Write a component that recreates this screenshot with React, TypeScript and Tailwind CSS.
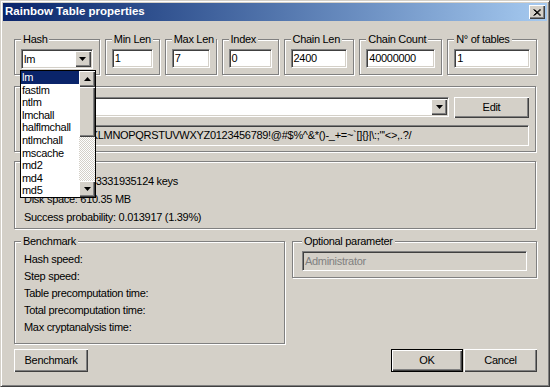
import type { ReactNode } from "react";

const SUNKEN =
  "border border-t-[#808080] border-l-[#808080] border-r-white border-b-white shadow-[inset_1px_1px_0_#404040,inset_-1px_-1px_0_#d4d0c8]";
const RAISED = "shadow-[inset_1px_1px_0_#fff,inset_-1px_-1px_0_#404040,inset_-2px_-2px_0_#808080]";

const HASHES = ["lm", "fastlm", "ntlm", "lmchall", "halflmchall", "ntlmchall", "mscache", "md2", "md4", "md5"];
const CHARSET = "ABCDEFGHIJKLMNOPQRSTUVWXYZ0123456789!@#$%^&*()-_+=~`[]{}|\\:;\"'<>,.?/";

function Group({ label, className = "", children }: { label?: string; className?: string; children?: ReactNode }) {
  return (
    <fieldset
      className={`min-w-0 border border-[#808080] px-[6px] shadow-[inset_1px_1px_0_#fff,1px_1px_0_#fff] ${className}`}
    >
      {label && <legend className="whitespace-nowrap bg-[#d4d0c8] px-[2px] leading-[13px]">{label}</legend>}
      {children}
    </fieldset>
  );
}

function Arrow({ up }: { up?: boolean }) {
  return (
    <svg width="7" height="4" viewBox="0 0 7 4" className="block">
      <polygon points={up ? "3.5,0 7,4 0,4" : "0,0 7,0 3.5,4"} fill="#000" />
    </svg>
  );
}

function Field({ value, className = "", disabled }: { value: string; className?: string; disabled?: boolean }) {
  return (
    <div
      className={`flex h-[19px] items-center overflow-hidden whitespace-nowrap pl-[2px] ${SUNKEN} ${
        disabled ? "bg-[#d4d0c8] text-[#808080]" : "bg-white"
      } ${className}`}
    >
      {value}
    </div>
  );
}

function Combo({ value, className = "", children }: { value: string; className?: string; children?: ReactNode }) {
  return (
    <div className={`relative flex h-[20px] items-center bg-white ${SUNKEN} ${className}`}>
      <span className="flex-1 pl-[2px]">{value}</span>
      <div className={`mr-px flex h-[16px] w-[16px] items-center justify-center bg-[#d4d0c8] ${RAISED}`}>
        <Arrow />
      </div>
      {children}
    </div>
  );
}

function HashList() {
  return (
    <div className="absolute left-[-2px] top-[calc(100%+2px)] z-10 flex h-[128px] w-[76px] border border-black bg-white">
      <div className="flex-1">
        {HASHES.map((h, i) => (
          <div
            key={h}
            className={`h-[12.6px] pl-[1px] leading-[12.6px] ${i === 0 ? "bg-[#0a246a] text-white" : ""}`}
          >
            {h}
          </div>
        ))}
      </div>
      <div className="flex w-[16px] flex-col bg-[image:repeating-conic-gradient(#fff_0_25%,#d4d0c8_0_50%)] bg-[length:2px_2px]">
        <div className={`flex h-[16px] items-center justify-center bg-[#d4d0c8] ${RAISED}`}>
          <Arrow up />
        </div>
        <div className={`h-[50px] bg-[#d4d0c8] ${RAISED}`} />
        <div className="flex-1" />
        <div className={`flex h-[16px] items-center justify-center bg-[#d4d0c8] ${RAISED}`}>
          <Arrow />
        </div>
      </div>
    </div>
  );
}

function Button({ children, className = "", isDefault }: { children: ReactNode; className?: string; isDefault?: boolean }) {
  return (
    <div
      className={`flex h-[23px] items-center justify-center bg-[#d4d0c8] ${
        isDefault ? "border border-black" : ""
      } ${RAISED} ${className}`}
    >
      {children}
    </div>
  );
}

export default function App() {
  return (
    <div className="flex h-[387px] w-[550px] flex-col border border-t-[#d4d0c8] border-l-[#d4d0c8] border-r-[#404040] border-b-[#404040] bg-[#d4d0c8] p-[2px] font-['Liberation_Sans',Arial,sans-serif] text-[11px] tracking-[-0.3px] text-black shadow-[inset_1px_1px_0_#fff,inset_-1px_-1px_0_#808080]">
      <div className="flex h-[18px] shrink-0 items-center justify-between bg-linear-to-r from-[#0a246a] to-[#a6caf0] pl-[2px] pr-[2px]">
        <span className="text-[11.5px] font-bold tracking-normal text-white">Rainbow Table properties</span>
        <div className={`flex h-[14px] w-[16px] items-center justify-center bg-[#d4d0c8] ${RAISED}`}>
          <svg width="8" height="7" viewBox="0 0 8 7">
            <path d="M0.5 0.5 L7 6.5 M1.5 0.5 L8 6.5 M7 0.5 L0.5 6.5 M8 0.5 L1.5 6.5" stroke="#000" strokeWidth="1" />
          </svg>
        </div>
      </div>

      <div className="flex flex-1 flex-col pl-[11px] pr-[10px]">
        <div className="mt-[12px] flex gap-[5px]">
          <Group label="Hash" className="w-[86px] pb-[5px] pt-[3px]">
            <Combo value="lm">
              <HashList />
            </Combo>
          </Group>
          <Group label="Min Len" className="w-[55px] pb-[5px] pt-[3px]">
            <Field value="1" />
          </Group>
          <Group label="Max Len" className="w-[52px] pb-[5px] pt-[3px]">
            <Field value="7" />
          </Group>
          <Group label="Index" className="w-[57px] pb-[5px] pt-[3px]">
            <Field value="0" />
          </Group>
          <Group label="Chain Len" className="w-[71px] pb-[5px] pt-[3px]">
            <Field value="2400" />
          </Group>
          <Group label="Chain Count" className="w-[83px] pb-[5px] pt-[3px]">
            <Field value="40000000" />
          </Group>
          <Group label="N° of tables" className="w-[90px] pb-[5px] pt-[3px]">
            <Field value="1" />
          </Group>
        </div>

        <Group label="Charset" className="mt-[5px] w-[522px] pb-[5px] pt-[4px]">
          <div className="flex gap-[5px]">
            <Combo value="" className="w-[428px]" />
            <Button className="w-[75px] !h-[21px]">Edit</Button>
          </div>
          <Field value={CHARSET} disabled className="mt-[7px] h-[21px] text-black" />
        </Group>

        <Group className="mt-[9px] w-[522px] pb-[4px] pt-[13px]">
          <div className="flex flex-col gap-[5px] pl-[3px] leading-[13px]">
            <span>Key space: 6823331935124 keys</span>
            <span>Disk space: 610.35 MB</span>
            <span>Success probability: 0.013917 (1.39%)</span>
          </div>
        </Group>

        <div className="mt-[6px] flex items-start gap-[7px]">
          <Group label="Benchmark" className="w-[272px] pb-[9px] pt-[5px]">
            <div className="flex flex-col gap-[4px] pl-[3px] leading-[13px]">
              <span>Hash speed:</span>
              <span>Step speed:</span>
              <span>Table precomputation time:</span>
              <span>Total precomputation time:</span>
              <span>Max cryptanalysis time:</span>
            </div>
          </Group>
          <Group label="Optional parameter" className="w-[246px] !px-[9px] pb-[6px] pt-[3px]">
            <Field value="Administrator" disabled className="h-[20px]" />
          </Group>
        </div>

        <div className="mt-[5px] flex">
          <Button className="w-[74px]">Benchmark</Button>
          <div className="flex-1" />
          <Button isDefault className="w-[72px]">
            OK
          </Button>
          <Button className="ml-[1px] w-[73px]">Cancel</Button>
        </div>
      </div>
    </div>
  );
}
